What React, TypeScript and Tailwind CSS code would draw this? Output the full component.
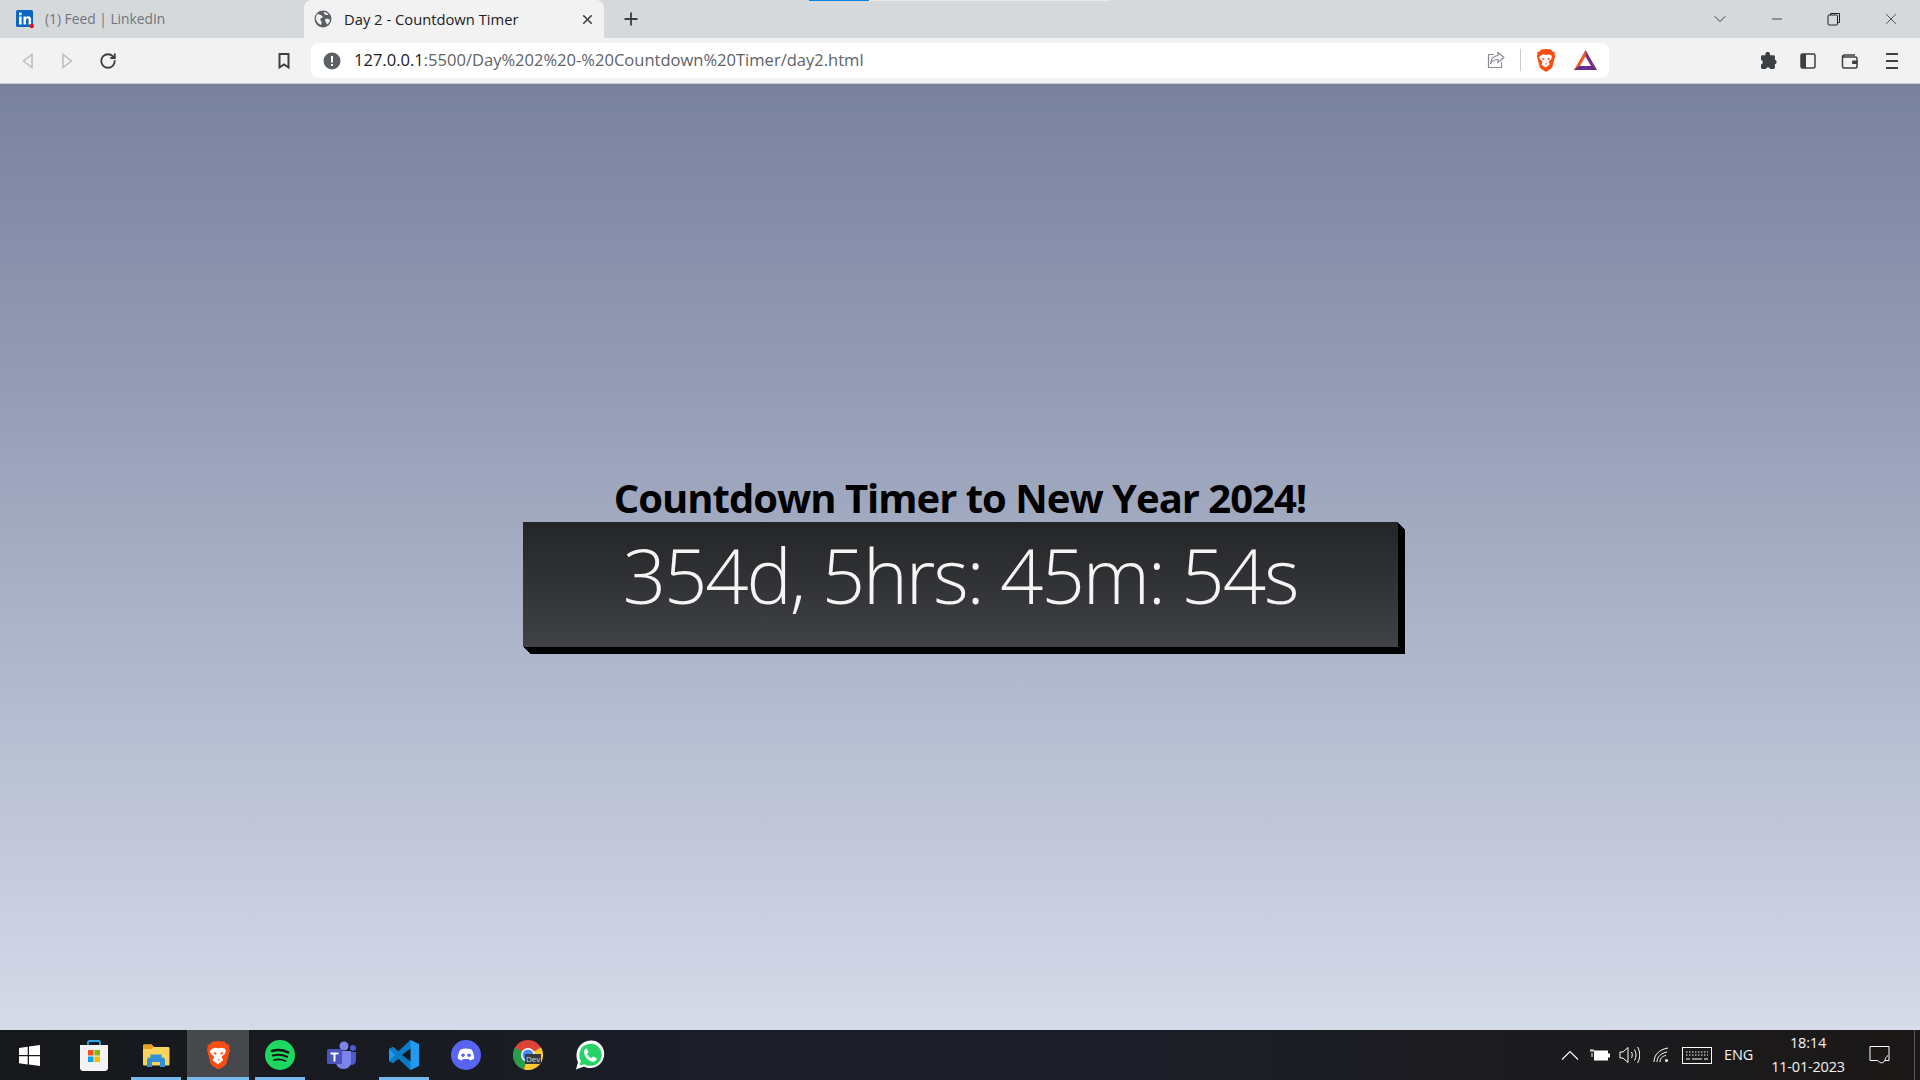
import React from 'react';
import { ChevronDown, Minus, Plus, RotateCw, X } from 'lucide-react';

const segoe = { fontFamily: '"Open Sans", "Noto Sans", sans-serif' };

function LinkedInIcon() {
    return (
        <svg width="19" height="20" viewBox="0 0 19 20">
            <rect x="0" y="1" width="17" height="17" rx="1.5" fill="#0a66c2" />
            <rect x="3" y="7.500" width="2.6" height="8" fill="#fff" />
            <rect x="3" y="3.600" width="2.6" height="2.6" fill="#fff" />
            <path d="M7.500 7.500h2.400v1.100c.5-.8 1.300-1.300 2.400-1.300 2.100 0 2.800 1.400 2.800 3.400v4.800h-2.500v-4.300c0-1-.2-1.700-1.200-1.700s-1.400.7-1.400 1.700v4.300H7.500z" fill="#fff" />
            <circle cx="15.800" cy="17" r="2.200" fill="#e0141c" />
        </svg>
    );
}

function GlobeIcon() {
    return (
        <svg width="18" height="18" viewBox="0 0 18 18">
            <circle cx="9" cy="9" r="8.500" fill="#5b6066" />
            <path d="M3 4.500c2-.5 3 .5 4.500 1s1.500 2 0 2.500-1.500 2-.5 3 .5 2.500 0 4C4 13.500 2 11 1.700 8.500 2 7 2.400 5.500 3 4.500zM10 2c1.500 0 3.500 1 4.500 2.500-1 1-2.500.5-3.500 0S9.500 3 10 2zM11.500 9c1.500-.5 3.500 0 4.500 1-.5 2-1.500 3.500-3 4.500-.5-1.500-1-2-1.500-3s-1-2 0-2.500z" fill="#f2f2f2" />
        </svg>
    );
}

function BraveIcon({ size }: { size: number }) {
    return (
        <svg width={size} height={size * 1.14} viewBox="0 0 21 24">
            <path d="M10.500 0 15.500.6l2.300 2.300 2.200.4-.6 2 .8 2.200-3 11.300c-.4 1.200-1.200 1.800-2.200 2.500L11.300 23.600c-.5.400-1.100.400-1.600 0L6 21.300c-1-.7-1.800-1.300-2.200-2.500L.8 7.500l.8-2.200-.6-2 2.200-.4L5.500.6z" fill="#fb4d13" />
            <path d="M5 6.500 8 5.600l2.500.6 2.500-.6 3 .9.8 2-1.200 2.700-2.100 1.400-.2 1.700 1.300 1.600-2.500 2.300-2.100 1.300-2.100-1.300L5.400 16l1.300-1.600-.2-1.700-2.100-1.400L3.200 8.600z" fill="#fff" />
            <path d="M6.500 9.200 9 10.200 8.400 11.500 6.900 11zM14.500 9.200 12 10.200 12.600 11.500 14.100 11zM9.300 15.300h2.400L10.500 16.500z" fill="#fb4d13" />
        </svg>
    );
}

function BatIcon() {
    return (
        <svg width="23" height="20" viewBox="0 0 23 20">
            <path d="M11.500 0 17 13H6z" fill="#e0492b" />
            <path d="M11.500 0 23 20H16L11.500 8z" fill="#7b2d82" />
            <path d="M11.500 0 0 20H5.500L11.500 8z" fill="#f15a22" />
            <path d="M11.500 6.500 17 16H6z" fill="#fff" />
            <path d="M0 20 5 16H18L23 20z" fill="#662d91" />
        </svg>
    );
}

function ChromeToolbarIcons() {
    return (
        <div className="flex items-center pr-[22px]">
            <svg width="18" height="18" viewBox="0 0 18 18" fill="#3c4043">
                <path d="M6.500 1.500a2.300 2.300 0 0 1 4.400 0l.2 1.800h3.400c.8 0 1.400.6 1.400 1.400v3a2.400 2.400 0 0 1 0 4.600v3.200c0 .8-.6 1.400-1.400 1.400h-3.300a2.300 2.300 0 0 0-4.400 0H3.400c-.8 0-1.400-.6-1.400-1.400V12.500a2.300 2.300 0 0 0 0-4.500V4.700c0-.8.600-1.400 1.400-1.400h3z" />
            </svg>
            <svg className="ml-[23px]" width="16" height="16" viewBox="0 0 16 16">
                <rect x="1" y="1" width="14" height="14" rx="1.500" fill="none" stroke="#3c4043" strokeWidth="1.500" />
                <rect x="1" y="1" width="5" height="14" fill="#3c4043" />
            </svg>
            <svg className="ml-[25px]" width="18" height="18" viewBox="0 0 18 18" fill="none" stroke="#3c4043" strokeWidth="1.500">
                <path d="M3 3h11M1.500 5.500c0-1.500.6-2.500 2-2.500M1.500 5v9.500c0 1 .6 1.500 1.500 1.500h11.500c1 0 1.500-.6 1.500-1.500V6.500c0-1-.6-1.500-1.500-1.500H1.500z" />
                <rect x="11" y="8.500" width="5.500" height="3.500" rx="1" fill="#3c4043" stroke="none" />
            </svg>
            <div className="ml-[27px] flex w-[12px] flex-col gap-[5px]">
                <div className="h-[2px] bg-[#3c4043]" />
                <div className="h-[2px] bg-[#3c4043]" />
                <div className="h-[2px] bg-[#3c4043]" />
            </div>
        </div>
    );
}

function Browser() {
    return (
        <div className="h-[84px] shrink-0" style={{ fontFamily: '"Open Sans", sans-serif' }}>
            <div className="relative flex h-[38px] items-end bg-[#d5d9dc]">
                <div className="absolute left-[809px] top-0 h-px w-[60px] bg-[#0a84e0]" />
                <div className="absolute left-[869px] top-0 h-px w-[241px] bg-[#e8e8e8]" />
                <div className="flex h-[38px] w-[304px] items-center pl-[16px]">
                    <LinkedInIcon />
                    <span className="ml-[10px] text-[13.800px] text-[#70757a]">(1) Feed | LinkedIn</span>
                </div>
                <div className="flex h-[38px] w-[300px] items-center rounded-t-[8px] bg-[#f2f2f2] pl-[10px]">
                    <GlobeIcon />
                    <span className="ml-[12px] text-[14.750px] text-[#202124]">Day 2 - Countdown Timer</span>
                    <X className="ml-auto mr-[9px]" size={15} strokeWidth={2.6} color="#3c4043" />
                </div>
                <div className="flex h-[38px] w-[54px] items-center justify-center">
                    <Plus size={20} strokeWidth={2.2} color="#3c4043" />
                </div>
                <div className="ml-auto flex h-[38px] items-center text-[#202124]">
                    <ChevronDown size={20} strokeWidth={1} />
                    <Minus className="ml-[39px]" size={16} strokeWidth={1.2} />
                    <svg className="ml-[42px]" width="14" height="14" viewBox="0 0 14 14" fill="none" stroke="#202124" strokeWidth="1">
                        <rect x="1" y="3" width="9.500" height="10" rx="1" />
                        <path d="M3.500 3V1.500h9v9H10.500" />
                    </svg>
                    <X className="ml-[41px] mr-[20px]" size={18} strokeWidth={1} />
                </div>
            </div>
            <div className="flex h-[46px] items-center border-b border-[#c8cbd0] bg-[#f2f2f2]">
                <svg className="ml-[21px]" width="14" height="18" viewBox="0 0 14 18" fill="none" stroke="#b9bcc0" strokeWidth="1.500">
                    <path d="M11 2.500v13L2.500 9z" />
                </svg>
                <svg className="ml-[25px]" width="14" height="18" viewBox="0 0 14 18" fill="none" stroke="#b9bcc0" strokeWidth="1.500">
                    <path d="M3 2.500v13L11.500 9z" />
                </svg>
                <RotateCw className="ml-[25px]" size={18} strokeWidth={2.4} color="#3c4043" />
                <svg className="ml-[160px]" width="14" height="18" viewBox="0 0 14 18" fill="none" stroke="#3c4043" strokeWidth="2">
                    <path d="M2.500 2h9v13.500L7 12.500l-4.500 3z" />
                </svg>
                <div className="ml-[20px] flex h-[35px] w-[1298px] items-center rounded-[8px] bg-white pl-[12px]">
                    <svg width="18" height="18" viewBox="0 0 18 18">
                        <circle cx="9" cy="9" r="8.500" fill="#5b6066" />
                        <rect x="8" y="4" width="2" height="6.500" fill="#fff" />
                        <rect x="8" y="12" width="2" height="2" fill="#fff" />
                    </svg>
                    <span className="ml-[13px] text-[16.550px] text-[#5f6368]">
                        <span className="text-[#202124]">127.0.0.1</span>:5500/Day%202%20-%20Countdown%20Timer/day2.html
                    </span>
                    <div className="ml-auto flex items-center pr-[12px]">
                        <svg width="18" height="18" viewBox="0 0 18 18" fill="none" stroke="#8a8d91" strokeWidth="1.200">
                            <path d="M7 3.500H1.500v13h13V11" />
                            <path d="M11 1.500 17 6.500 11 11.500V8.500C7.500 8.500 5 10 3.500 13 4 8 7 4.800 11 4.500z" />
                        </svg>
                        <div className="ml-[15px] h-[22px] w-px bg-[#c8cbd0]" />
                        <div className="ml-[15px] flex"><BraveIcon size={20} /></div>
                        <div className="ml-[18px] flex"><BatIcon /></div>
                    </div>
                </div>
                <div className="ml-auto"><ChromeToolbarIcons /></div>
            </div>
        </div>
    );
}

function AppIcon({ children, active, running }: { children: React.ReactNode; active?: boolean; running?: boolean }) {
    return (
        <div className={`relative flex h-[50px] w-[62px] items-center justify-center ${active ? 'bg-[#47484c]' : ''}`}>
            {children}
            {running && <div className={`absolute bottom-0 h-[3px] bg-[#76b9ed] ${active ? 'left-0 right-0' : 'left-[6px] right-[6px]'}`} />}
        </div>
    );
}

function Taskbar() {
    return (
        <div className="flex h-[50px] shrink-0 items-center bg-gradient-to-r from-[#17181c] via-[#1c1f2b] to-[#1b1817] text-white" style={segoe}>
            <div className="flex h-[50px] w-[63px] items-center justify-center pr-[4px]">
                <svg width="21" height="21" viewBox="0 0 21 21" fill="#fff">
                    <path d="M0 3 8.700 1.700V10H0zM10 1.500 21 0V10H10zM0 11.300H8.700V19.600L0 18.300zM10 11.300H21V21L10 19.500z" />
                </svg>
            </div>
            <AppIcon>
                <svg width="30" height="32" viewBox="0 0 30 32">
                    <path d="M9 7V3.500C9 2.500 9.500 2 10.500 2h9c1 0 1.500.5 1.500 1.500V7" fill="none" stroke="#29a9e0" strokeWidth="1.800" />
                    <path d="M1 6h28v23c0 1.500-1 3-3 3H4c-2 0-3-1.500-3-3z" fill="#f3f3f3" />
                    <rect x="9" y="11" width="5.500" height="5.500" fill="#f25022" />
                    <rect x="15.500" y="11" width="5.500" height="5.500" fill="#7fba00" />
                    <rect x="9" y="17.500" width="5.500" height="5.500" fill="#00a4ef" />
                    <rect x="15.500" y="17.500" width="5.500" height="5.500" fill="#ffb900" />
                </svg>
            </AppIcon>
            <AppIcon running>
                <svg width="28" height="24" viewBox="0 0 28 24">
                    <path d="M1 3c0-1 .5-1.500 1.500-1.500h7L12 4h14c1 0 1.500.5 1.500 1.500V21c0 1-.5 1.500-1.500 1.500H2.500C1.500 22.500 1 22 1 21z" fill="#f9d45c" />
                    <path d="M1 3c0-1 .5-1.500 1.500-1.500h7L12 4 9.500 6H1z" fill="#e3a11f" />
                    <path d="M5 24v-7c0-1.500 1-2.500 2-2.500h1.500v-3h11v3H21c1 0 2 1 2 2.500v7h-5v-5h-8v5z" fill="#2f8fd8" />
                </svg>
            </AppIcon>
            <AppIcon active running><BraveIcon size={25} /></AppIcon>
            <AppIcon running>
                <svg width="30" height="30" viewBox="0 0 30 30">
                    <circle cx="15" cy="15" r="15" fill="#1ed760" />
                    <g fill="none" stroke="#191414" strokeLinecap="round">
                        <path d="M7 11c5.500-1.600 11-1.200 16 1.300" strokeWidth="2.600" />
                        <path d="M8 15.500c4.800-1.300 9.500-.9 14 1.200" strokeWidth="2.200" />
                        <path d="M9 20c4-1 7.800-.7 11.500 1" strokeWidth="1.800" />
                    </g>
                </svg>
            </AppIcon>
            <AppIcon>
                <svg width="30" height="28" viewBox="0 0 30 28">
                    <circle cx="17" cy="5" r="4.500" fill="#7b83eb" />
                    <circle cx="26" cy="7" r="3" fill="#5059c9" />
                    <path d="M21 11h8v8c0 3-2 5-5 5-1.500 0-2.500-.5-3-1z" fill="#5059c9" />
                    <path d="M9 10h15v11c0 4-3 7-7.500 7S9 25 9 21z" fill="#7b83eb" />
                    <rect x="0" y="8" width="15" height="15" rx="1.500" fill="#4b53bc" />
                    <path d="M3.500 11.500h8v2H8.500v7h-2v-7h-3z" fill="#fff" />
                </svg>
            </AppIcon>
            <AppIcon running>
                <svg width="30" height="30" viewBox="0 0 30 30">
                    <path d="M21.500 0 30 4v22l-8.500 4-12-11.500L4 23 0 21V9l4-2 5.500 4.500z" fill="#1f9cf0" />
                    <path d="M21.500 0v30l-12-11.500L4 23 0 21l6-6-6-6 4-2 5.500 4.500z" fill="#0a7cc4" />
                    <path d="M21.500 8.500v13L13 15z" fill="#17181c" />
                </svg>
            </AppIcon>
            <AppIcon>
                <svg width="30" height="30" viewBox="0 0 30 30">
                    <circle cx="15" cy="15" r="15" fill="#5865f2" />
                    <path d="M9.500 9.500c3.500-1.500 7.500-1.500 11 0 1.800 2.700 2.800 6 2.700 9-1.300 1-2.700 1.700-4.300 2l-1-1.600H12l-1 1.600c-1.600-.3-3-1-4.300-2-.1-3 .9-6.300 2.800-9z" fill="#fff" />
                    <circle cx="12" cy="15.300" r="1.800" fill="#5865f2" />
                    <circle cx="18" cy="15.300" r="1.800" fill="#5865f2" />
                </svg>
            </AppIcon>
            <AppIcon>
                <div className="relative flex">
                    <svg width="30" height="30" viewBox="0 0 30 30">
                        <circle cx="15" cy="15" r="15" fill="#db4437" />
                        <path d="M15 15 2 7.500A15 15 0 0 0 11 29.500z" fill="#2a9d4a" />
                        <path d="M15 15 11 29.500A15 15 0 0 0 28 7.500z" fill="#fcc934" />
                        <circle cx="15" cy="15" r="7" fill="#fff" />
                        <circle cx="15" cy="15" r="5.500" fill="#4a8af4" />
                    </svg>
                    <span className="absolute left-[12px] top-[14px] bg-[#3a3a3a] px-[1px] text-[8px] leading-[10px] text-[#ddd]">Dev</span>
                </div>
            </AppIcon>
            <AppIcon>
                <svg width="30" height="30" viewBox="0 0 30 30">
                    <path d="M1 29.500 3 22C.5 17 1 10 5 5.500 11-1 21-1 26 5c5 6 4 15-2 20-4.500 3.500-10.500 4-15 1.500z" fill="#fff" />
                    <path d="M4.500 25.500 5.800 21C3.500 17 4 11 7 7.500c5-5 13-5 17 0s3.500 12.500-1.500 16c-4 3-9 3-13 .8z" fill="#25d366" />
                    <path d="M11 8.500c-1.500.8-2.500 2.500-2 4.500 1 4 4 7.500 8 8.500 2 .5 3.800-.3 4.500-2 .3-.7.2-1.200-.3-1.500l-2.700-1.300c-.5-.2-.8 0-1.100.4l-.8 1c-2-.8-3.600-2.400-4.500-4.400l.9-.9c.3-.3.4-.7.200-1.100l-1-2.700c-.2-.6-.6-.7-1.200-.5z" fill="#fff" />
                </svg>
            </AppIcon>
            <div className="ml-auto flex items-center">
                <svg width="18" height="10" viewBox="0 0 18 10" fill="none" stroke="#fff" strokeWidth="1.100">
                    <path d="M1 9.500 9 1.500l8 8" />
                </svg>
                <svg className="ml-[10px]" width="21" height="14" viewBox="0 0 21 14">
                    <rect x="5" y="2.500" width="14" height="10" fill="#fff" />
                    <rect x="19" y="5.500" width="2" height="4" fill="#fff" />
                    <path d="M1 3h4M2 1v2M4 1v2M3 5v4" stroke="#fff" fill="none" />
                </svg>
                <svg className="ml-[9px]" width="21" height="18" viewBox="0 0 21 18" fill="none" stroke="#fff" strokeWidth="1">
                    <path d="M1 6h3l5-4.500v15L4 12H1zM12.500 6c1 2 1 4 0 6M15.500 3.500c2 3.500 2 7.500 0 11M18.500 1c3 5 3 11 0 16" />
                </svg>
                <svg className="ml-[13px]" width="16" height="16" viewBox="0 0 16 16" fill="none" stroke="#fff" strokeWidth="1">
                    <path d="M1 15C1 8 6 2.500 15 1M4 15c0-5 4-9 10-10M7 15c0-3 2-6 6-6.500" />
                    <circle cx="13.500" cy="13.500" r="1.500" fill="#fff" stroke="none" />
                </svg>
                <svg className="ml-[13px]" width="30" height="17" viewBox="0 0 30 17" fill="none" stroke="#fff" strokeWidth="1">
                    <rect x=".5" y=".5" width="29" height="16" />
                    <path d="M4 5h22M4 8h22" strokeDasharray="1.500 1.500" />
                    <path d="M4 12h4M10 12h10M22 12h4" />
                </svg>
                <span className="ml-[12px] text-[14.500px] tracking-[-0.2px] text-[#f2f2f2]">ENG</span>
                <div className="ml-[17px] flex w-[76px] flex-col items-center text-[14.500px] leading-[24px] tracking-[-0.2px] text-[#f2f2f2]">
                    <span>18:14</span>
                    <span>11-01-2023</span>
                </div>
                <svg className="ml-[23px]" width="21" height="20" viewBox="0 0 21 20" fill="none" stroke="#fff" strokeWidth="1">
                    <path d="M1 1.500h19v14h-4.500a3 3 0 0 1-5 1.500L8.500 15.500H1z" />
                    <path d="M19 10.500c-1.500 1-2.500 2.500-3 4.500" />
                </svg>
                <div className="ml-[24px] h-[50px] w-px bg-[#55565a]" />
                <div className="w-[5px]" />
            </div>
        </div>
    );
}

export default function App() {
    return (
        <div className="flex h-screen w-full flex-col overflow-hidden">
            <Browser />
            <main className="flex flex-1 flex-col items-center justify-center bg-gradient-to-b from-[#78819e] to-[#d5dbe9] pt-[6px]">
                <h1 className="text-[40px] font-bold leading-[48px] tracking-[-1px] text-black" style={segoe}>
                    Countdown Timer to New Year 2024!
                </h1>
                <div
                    className="flex h-[125px] w-[875px] justify-center bg-gradient-to-b from-[#242527] to-[#414245] pt-[3px] text-[76px] font-light leading-[100px] tracking-[-2.1px] text-[#f5f5f5] shadow-[1px_1px_0_#000,2px_2px_0_#000,3px_3px_0_#000,4px_4px_0_#000,5px_5px_0_#000,6px_6px_0_#000,7px_7px_0_#000]"
                    style={segoe}
                >
                    354d, 5hrs: 45m: 54s
                </div>
            </main>
            <Taskbar />
        </div>
    );
}
